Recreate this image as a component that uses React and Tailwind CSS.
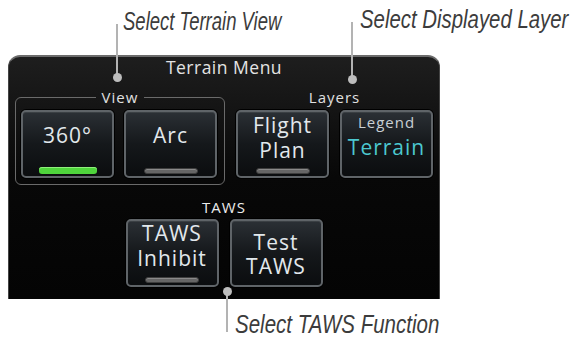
import React from 'react';

const ui = "font-['Open_Sans','DejaVu_Sans',sans-serif]";
const cap = "font-['Liberation_Sans',sans-serif] italic text-[25px] leading-[25px] text-[#3c3c3c] whitespace-nowrap origin-left";

function Bar({ on }) {
  return on ? (
    <div className="mt-auto mb-[2px] w-[58px] h-[7px] rounded-[3px] bg-[#4fd43c] shadow-[inset_0_1px_0_#8ef07a]" />
  ) : (
    <div className="mt-auto mb-[2px] w-[54px] h-[6px] rounded-[3px] bg-[#666] border border-[#3e3e3e] shadow-[inset_0_1px_0_#8a8a8a]" />
  );
}

function Btn({ children, className = '' }) {
  return (
    <div
      className={`w-[93px] h-[68px] shrink-0 rounded-[5px] border-2 border-[#5f6468] bg-gradient-to-b from-[#2b3035] via-[#15181b] to-[#0b0d0f] shadow-[0_0_0_1px_#000,inset_0_1px_0_rgba(255,255,255,0.08)] flex flex-col items-center text-[#e2e8ec] text-[21px] tracking-[1px] ${className}`}
    >
      {children}
    </div>
  );
}

function Leader({ x, top, bottom, dot }) {
  return (
    <>
      <div
        className="absolute w-[2px] bg-[#b3b3b3]"
        style={{ left: x - 1, top, height: bottom - top }}
      />
      <div
        className="absolute w-[9px] h-[9px] rounded-full bg-[#bdbdbd]"
        style={{ left: x - 4.5, top: dot - 4.5 }}
      />
    </>
  );
}

export default function App() {
  return (
    <div className="relative w-[571px] h-[346px] bg-white overflow-hidden pt-[55px] pl-[8px]">
      {/* panel */}
      <div className={`w-[432px] h-[244px] rounded-t-[12px] border-t-2 border-x border-t-[#6c6c6c] border-x-[#444] bg-gradient-to-b from-[#1e1e1e] via-[#080808] to-[#040404] ${ui}`}>
        <div className="text-center text-[17.5px] leading-[20px] tracking-[0.5px] text-[#e4e4e4] font-medium">
          Terrain Menu
        </div>

        <div className="flex mt-[11px] ml-[6px]">
          <fieldset className="w-[210px] border border-[#6a6a6a] rounded-[6px] px-[5px] pb-[6px]">
            <legend className="mx-auto px-[6px] text-[15px] leading-[18px] tracking-[1px] text-[#e0e0e0]">
              View
            </legend>
            <div className="flex gap-[10px] pt-[4px]">
              <Btn>
                <span className="pt-[11px] leading-[24px]">360°</span>
                <Bar on />
              </Btn>
              <Btn>
                <span className="pt-[11px] leading-[24px]">Arc</span>
                <Bar />
              </Btn>
            </div>
          </fieldset>

          <div className="ml-[11px] flex flex-col items-center">
            <div className="text-[15px] leading-[18px] tracking-[1px] text-[#e0e0e0]">Layers</div>
            <div className="flex gap-[11px] pt-[4px]">
              <Btn>
                <span className="pt-[1px] leading-[25px] text-center">
                  Flight
                  <br />
                  Plan
                </span>
                <Bar />
              </Btn>
              <Btn>
                <span className="pt-[1px] text-[15px] leading-[18px] text-[#c9d0d4]">Legend</span>
                <span className="mt-[4px] leading-[24px] text-[#4cc8d0]">Terrain</span>
              </Btn>
            </div>
          </div>
        </div>

        <div className="mt-[13px] flex flex-col items-center">
          <div className="text-[15px] leading-[18px] tracking-[1px] text-[#ececec] font-medium">TAWS</div>
          <div className="flex gap-[11px] pt-[3px]">
            <Btn>
              <span className="leading-[25px] text-center">
                TAWS
                <br />
                Inhibit
              </span>
              <Bar />
            </Btn>
            <Btn>
              <span className="pt-[9px] leading-[24px] text-center">
                Test
                <br />
                TAWS
              </span>
            </Btn>
          </div>
        </div>
      </div>

      {/* callouts */}
      <div className={`absolute left-[123px] top-[9px] scale-x-[0.74] ${cap}`}>Select Terrain View</div>
      <div className={`absolute left-[360px] top-[7px] scale-x-[0.815] ${cap}`}>Select Displayed Layer</div>
      <div className={`absolute left-[235px] top-[312px] scale-x-[0.82] ${cap}`}>Select TAWS Function</div>

      <Leader x={117} top={24} bottom={77} dot={77} />
      <Leader x={352} top={22} bottom={79} dot={79} />
      <Leader x={227} top={291} bottom={332} dot={291} />
    </div>
  );
}
